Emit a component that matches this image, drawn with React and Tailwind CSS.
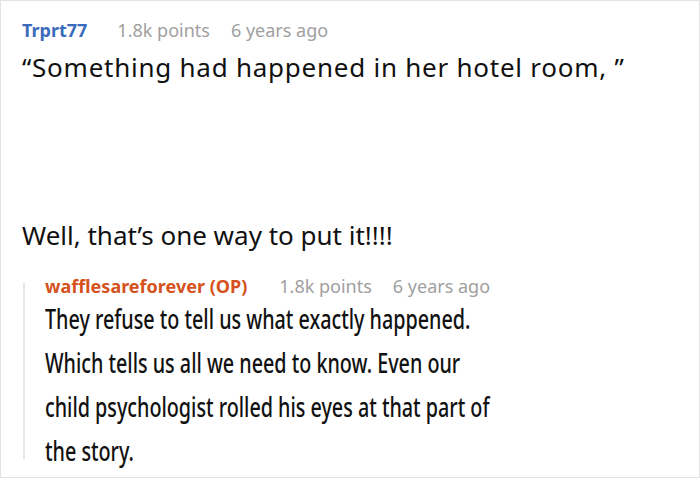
export default function App() {
  return (
    <div className="w-[700px] h-[478px] bg-white border border-[#e2e2e2] overflow-hidden" style={{ fontFamily: '"Noto Sans", sans-serif' }}>
      <div className="pl-[21px] pt-[16px]">
        <div className="flex items-baseline text-[18px] leading-[26px]">
          <span className="font-bold text-[#3a6bbd]">Trprt77</span>
          <span className="ml-[30px] text-[#a0a0a0]">1.8k points</span>
          <span className="ml-[21px] text-[#a0a0a0]">6 years ago</span>
        </div>
        <p className="text-[26px] leading-[34px] text-[#111] mt-[7px] tracking-[0.75px]">“Something had happened in her hotel room, ”</p>
        <p className="text-[26px] leading-[34px] text-[#111] mt-[134px]">Well, that’s one way to put it!!!!</p>
        <div className="mt-[21px] ml-[1px] flex">
          <div className="w-[2px] bg-[#e6e6e6] mt-[10px] mb-[14px] shrink-0" />
          <div className="pl-[20px]">
            <div className="flex items-baseline text-[18px] leading-[26px]">
              <span className="font-bold text-[#d5521c]">wafflesareforever (OP)</span>
              <span className="ml-[32px] text-[#a0a0a0]">1.8k points</span>
              <span className="ml-[21px] text-[#a0a0a0]">6 years ago</span>
            </div>
            <p className="text-[27px] leading-[44px] font-medium text-[#111] mt-[-2px] origin-left scale-x-[0.731] whitespace-nowrap">
              They refuse to tell us what exactly happened.<br />
              Which tells us all we need to know. Even our<br />
              child psychologist rolled his eyes at that part of<br />
              the story.
            </p>
          </div>
        </div>
      </div>
    </div>
  );
}
